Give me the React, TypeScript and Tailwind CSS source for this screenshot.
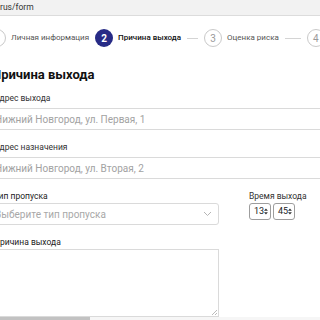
import React from 'react';

const font = { fontFamily: 'Roboto, "Noto Sans", sans-serif' };

function Step({ n, label, active }: { n: number; label: string; active?: boolean }) {
  return (
    <div className="flex items-center gap-[5px] shrink-0">
      <div
        className={
          active
            ? 'w-[18px] h-[18px] rounded-full bg-[#272b86] text-white text-[10px] font-bold flex items-center justify-center'
            : 'w-[18px] h-[18px] rounded-full border border-[#c9c9c9] text-[#9a9a9a] text-[10px] flex items-center justify-center'
        }
      >
        {n}
      </div>
      {label && (
        <span className={active ? 'text-[8px] text-[#111] font-medium' : 'text-[8px] text-[#555]'}>{label}</span>
      )}
    </div>
  );
}

function Line({ w }: { w: string }) {
  return <div className={`${w} h-px bg-[#d4d4d4] shrink-0 mx-[6px]`} />;
}

export default function App() {
  return (
    <div className="w-[320px] h-[320px] overflow-hidden bg-white relative" style={font}>
      <div className="h-[16px] bg-[#f2f2f2] border-b border-[#dcdcdc] flex items-center text-[8.5px] text-[#333] leading-none">
        rus/form
      </div>
      <div className="ml-[-12px] w-[480px]">
        <div className="flex items-center h-[18px] mt-[13px]">
          <Step n={1} label="Личная информация" />
          <div className="w-[6px]" />
          <Step n={2} label="Причина выхода" active />
          <Line w="w-[11px]" />
          <Step n={3} label="Оценка риска" />
          <Line w="w-[16px]" />
          <Step n={4} label="" />
        </div>

        <div className="ml-[4px]">
          <h1 className="text-[13px] font-bold text-[#111] mt-[18px] leading-[20px]">Причина выхода</h1>

          <div className="mt-[6px] text-[8.5px] text-[#333] leading-[14px] ml-[2px]">Адрес выхода</div>
          <div className="mt-[3px] h-[22px] border border-[#dadada] ml-[-6px] pl-[8px] flex items-center text-[10px] text-[#a2a2a2]">
            Нижний Новгород, ул. Первая, 1
          </div>

          <div className="mt-[10px] text-[8.5px] text-[#333] leading-[14px] ml-[2px]">Адрес назначения</div>
          <div className="mt-[3px] h-[22px] border border-[#dadada] ml-[-6px] pl-[8px] flex items-center text-[10px] text-[#a2a2a2]">
            Нижний Новгород, ул. Вторая, 2
          </div>

          <div className="flex mt-[10px] ml-[-6px]">
            <div className="w-[233px]">
              <div className="text-[8.5px] text-[#222] leading-[14px] ml-[8px]">Тип пропуска</div>
              <div className="h-[22px] border border-[#dadada] rounded-[3px] pl-[8px] pr-[6px] flex items-center justify-between text-[10px] text-[#a8a8a8]">
                <span>Выберите тип пропуска</span>
                <svg width="9" height="6" viewBox="0 0 9 6" fill="none">
                  <path d="M1 1l3.5 3.5L8 1" stroke="#b5b5b5" strokeWidth="1" />
                </svg>
              </div>
            </div>
            <div className="ml-[30px]">
              <div className="text-[8.5px] text-[#333] leading-[14px]">Время выхода</div>
              <div className="flex gap-[2px]">
                {['13', '45'].map((v) => (
                  <div
                    key={v}
                    className="w-[22px] h-[17px] border border-[#9d9d9d] rounded-[3px] flex items-center justify-between pl-[4px] pr-[2px] text-[9px] text-[#222]"
                  >
                    <span>{v}</span>
                    <svg width="5" height="9" viewBox="0 0 5 9">
                      <path d="M2.5 0.5L5 3.5H0z" fill="#333" />
                      <path d="M2.5 8.5L5 5.5H0z" fill="#333" />
                    </svg>
                  </div>
                ))}
              </div>
            </div>
          </div>

          <div className="mt-[10px] text-[8.5px] text-[#222] leading-[14px] ml-[2px]">Причина выхода</div>
          <div className="ml-[-6px] w-[233px] h-[68px] border border-[#dadada] relative">
            <svg className="absolute right-[1px] bottom-[1px]" width="6" height="6" viewBox="0 0 6 6">
              <path d="M6 1L1 6M6 4L4 6" stroke="#aaa" strokeWidth="0.8" />
            </svg>
          </div>
        </div>
      </div>
      <div className="absolute left-0 bottom-0 w-full h-[3px] bg-[#f6f6f6]">
        <div className="w-[90px] h-full bg-[#c2c2c2]" />
      </div>
    </div>
  );
}
